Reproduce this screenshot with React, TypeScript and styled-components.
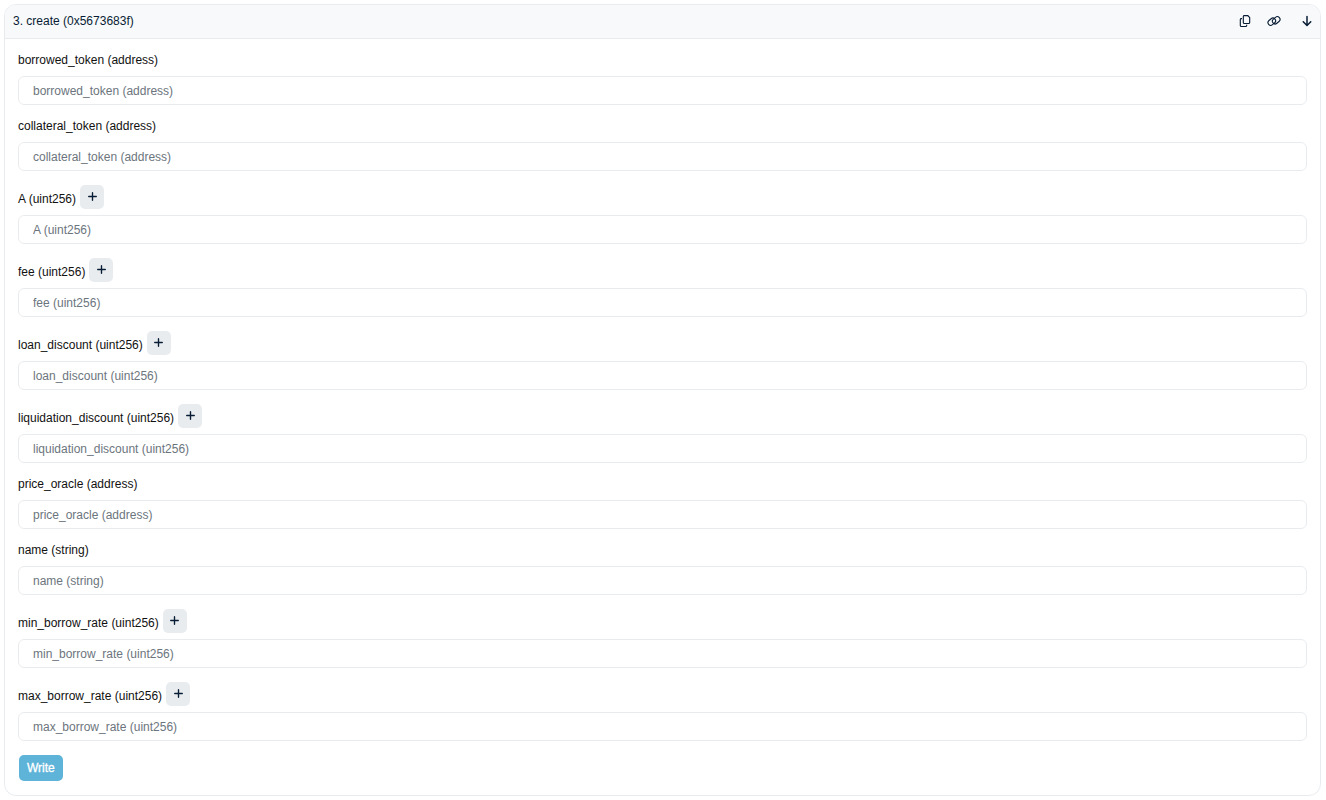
import React from "react";
import styled, { createGlobalStyle } from "styled-components";
import { FaArrowDown, FaPlus, FaRegCopy } from "react-icons/fa6";

const GlobalStyle = createGlobalStyle`
  *, *::before, *::after { box-sizing: border-box; }
  body {
    margin: 0;
    background: #fff;
    color: #212529;
    font-family: "Liberation Sans", Arial, sans-serif;
    font-size: 12px;
  }
`;

const Page = styled.main`
  padding: 4px 5px 4px 4px;
`;

const Card = styled.section`
  border: 1px solid #e9ecef;
  border-radius: 12px;
  overflow: hidden;
  background: #fff;
`;

const Header = styled.header`
  display: flex;
  align-items: center;
  justify-content: space-between;
  height: 34px;
  padding: 0 7px 2px 8px;
  border-bottom: 1px solid #e9ecef;
  background: #f8f9fa;
  color: #081d35;
`;

const Title = styled.h2`
  margin: 0;
  font-size: 12px;
  font-weight: 400;
  line-height: 18px;
`;

const Actions = styled.div`
  display: flex;
  align-items: center;
  gap: 16px;
`;

const IconButton = styled.button<{ $spaced?: boolean }>`
  display: flex;
  align-items: center;
  justify-content: center;
  height: 18px;
  margin: 0 0 0 ${(p) => (p.$spaced ? "4px" : "0")};
  padding: 0;
  border: 0;
  background: none;
  color: inherit;
  cursor: pointer;
`;

const Form = styled.form`
  display: flex;
  flex-direction: column;
  align-items: stretch;
  gap: 12px;
  padding: 12px 13px 14px;
`;

const Field = styled.div`
  display: flex;
  flex-direction: column;
  gap: 6px;
`;

const LabelRow = styled.div<{ $tall: boolean }>`
  display: flex;
  align-items: flex-end;
  gap: 4px;
  padding-top: ${(p) => (p.$tall ? "2px" : "0")};
`;

const Label = styled.label`
  line-height: 19px;
  color: #111;
`;

const AddButton = styled.button`
  display: flex;
  align-items: center;
  justify-content: center;
  width: 24px;
  height: 24px;
  padding: 0 0 2px;
  border: 0;
  border-radius: 5px;
  background: #e9ecef;
  color: #081d35;
  cursor: pointer;
`;

const Input = styled.input`
  width: 100%;
  height: 29px;
  padding: 0 14px;
  border: 1px solid #e9ecef;
  border-radius: 6px;
  background: #fff;
  color: #212529;
  font: inherit;

  &::placeholder {
    color: #6c757d;
    opacity: 1;
  }
`;

const WriteButton = styled.button`
  align-self: flex-start;
  height: 26px;
  margin: 2px 0 0 1px;
  padding: 0 8px;
  border: 0;
  border-radius: 5px;
  background: #5eb3d8;
  color: #fff;
  font: inherit;
  -webkit-text-stroke: 0.3px #fff;
  cursor: pointer;
`;

const LinkIcon = () => (
  <svg width="14" height="12" viewBox="0 0 14 12" fill="none" stroke="currentColor" strokeWidth="1.1" aria-hidden="true">
    <rect x="0.7" y="4" width="8.2" height="5.4" rx="2.7" transform="rotate(-40 4.8 6.7)" />
    <rect x="5.1" y="2.6" width="8.2" height="5.4" rx="2.7" transform="rotate(-40 9.2 5.3)" />
  </svg>
);

const fields = [
  { name: "borrowed_token", type: "address" },
  { name: "collateral_token", type: "address" },
  { name: "A", type: "uint256" },
  { name: "fee", type: "uint256" },
  { name: "loan_discount", type: "uint256" },
  { name: "liquidation_discount", type: "uint256" },
  { name: "price_oracle", type: "address" },
  { name: "name", type: "string" },
  { name: "min_borrow_rate", type: "uint256" },
  { name: "max_borrow_rate", type: "uint256" },
];

export default function App() {
  return (
    <>
      <GlobalStyle />
      <Page>
        <Card>
          <Header>
            <Title>3. create (0x5673683f)</Title>
            <Actions>
              <IconButton type="button" aria-label="Copy method">
                <FaRegCopy size={12} />
              </IconButton>
              <IconButton type="button" aria-label="Copy link">
                <LinkIcon />
              </IconButton>
              <IconButton type="button" aria-label="Collapse" $spaced>
                <FaArrowDown size={12} />
              </IconButton>
            </Actions>
          </Header>
          <Form onSubmit={(e) => e.preventDefault()}>
            {fields.map(({ name, type }) => {
              const text = `${name} (${type})`;
              const numeric = type === "uint256";
              return (
                <Field key={name}>
                  <LabelRow $tall={numeric}>
                    <Label htmlFor={name}>{text}</Label>
                    {numeric && (
                      <AddButton type="button" aria-label={`Add zeros to ${name}`}>
                        <FaPlus size={11} />
                      </AddButton>
                    )}
                  </LabelRow>
                  <Input id={name} type="text" placeholder={text} />
                </Field>
              );
            })}
            <WriteButton type="submit">Write</WriteButton>
          </Form>
        </Card>
      </Page>
    </>
  );
}
